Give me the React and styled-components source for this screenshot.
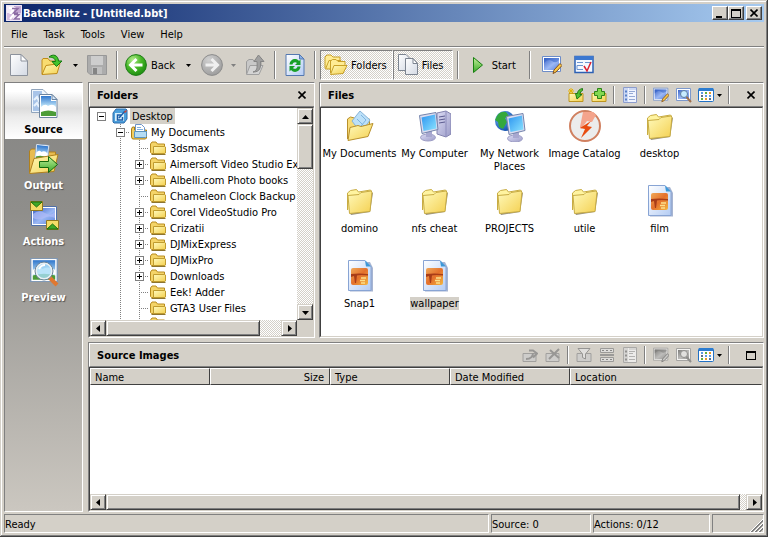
import React, { useState } from 'react';
import styled, { createGlobalStyle, css } from 'styled-components';

const face = '#d4d0c8';
const shade = '#808080';
const dark = '#404040';

const GlobalStyle = createGlobalStyle`
  * {
    box-sizing: border-box;
  }
  body {
    margin: 0;
    background: ${face};
    color: #000;
    font-family: "DejaVu Sans Condensed", "Noto Sans", sans-serif;
    font-size: 11px;
    line-height: 13px;
  }
  button {
    margin: 0;
    padding: 0;
    border: none;
    background: none;
    color: inherit;
    font: inherit;
  }
  ul {
    margin: 0;
    padding: 0;
    list-style: none;
  }
  h2 {
    margin: 0;
    font: inherit;
    font-weight: bold;
  }
  svg {
    display: block;
    flex: none;
  }
`;

const raised = css`
  background: ${face};
  border: 1px solid;
  border-color: ${face} ${dark} ${dark} ${face};
  box-shadow: inset 1px 1px 0 #fff, inset -1px -1px 0 ${shade};
`;

const dither = css`
  background: repeating-conic-gradient(#fff 0 25%, ${face} 0 50%) 0 0 / 2px 2px;
`;

/* ---------- icons ---------- */

const GradientSvg = styled.svg`
  width: 0;
  height: 0;
`;

const Gradients = () => (
  <GradientSvg aria-hidden="true">
    <defs>
      <linearGradient id="yellow" x1="0" y1="0" x2="1" y2="1">
        <stop offset="0" stopColor="#fffabc" />
        <stop offset="1" stopColor="#f4d050" />
      </linearGradient>
      <linearGradient id="paper" x1="0" y1="0" x2="1" y2="1">
        <stop offset="0" stopColor="#fff" />
        <stop offset="1" stopColor="#d4dae4" />
      </linearGradient>
      <linearGradient id="bluePaper" x1="0" y1="0" x2="1" y2="1">
        <stop offset="0" stopColor="#fff" />
        <stop offset="1" stopColor="#b4ccf4" />
      </linearGradient>
      <linearGradient id="screen" x1="0" y1="0" x2="1" y2="1">
        <stop offset="0" stopColor="#2c94f0" />
        <stop offset="1" stopColor="#8ce4ff" />
      </linearGradient>
      <linearGradient id="sky" x1="0" y1="0" x2="0" y2="1">
        <stop offset="0" stopColor="#2f76cc" />
        <stop offset="0.65" stopColor="#b8e0f8" />
        <stop offset="1" stopColor="#e8f6fc" />
      </linearGradient>
      <linearGradient id="picture" x1="0" y1="0" x2="1" y2="1">
        <stop offset="0" stopColor="#3a64c8" />
        <stop offset="0.55" stopColor="#9cb8f4" />
        <stop offset="1" stopColor="#5c84dc" />
      </linearGradient>
      <linearGradient id="sunset" x1="0" y1="0" x2="1" y2="1">
        <stop offset="0" stopColor="#f0a858" />
        <stop offset="0.5" stopColor="#e4702c" />
        <stop offset="1" stopColor="#f4b840" />
      </linearGradient>
      <linearGradient id="case" x1="0" y1="0" x2="1" y2="1">
        <stop offset="0" stopColor="#dcdcf4" />
        <stop offset="1" stopColor="#9c9cc8" />
      </linearGradient>
      <radialGradient id="greenBall" cx="0.35" cy="0.25" r="0.8">
        <stop offset="0" stopColor="#b4ec8c" />
        <stop offset="0.5" stopColor="#48b828" />
        <stop offset="1" stopColor="#1c8c10" />
      </radialGradient>
      <radialGradient id="grayBall" cx="0.35" cy="0.25" r="0.8">
        <stop offset="0" stopColor="#d0d0d0" />
        <stop offset="1" stopColor="#9c9c9c" />
      </radialGradient>
      <radialGradient id="globe" cx="0.3" cy="0.3" r="0.8">
        <stop offset="0" stopColor="#70b8f8" />
        <stop offset="1" stopColor="#0c48a8" />
      </radialGradient>
      <linearGradient id="greenArrow" x1="0" y1="0" x2="0" y2="1">
        <stop offset="0" stopColor="#c4f09c" />
        <stop offset="1" stopColor="#38a828" />
      </linearGradient>
    </defs>
  </GradientSvg>
);

const AppIcon = () => (
  <svg width="16" height="16" viewBox="0 0 16 16">
    <path d="M0 0h16v16H0z" fill="#f4ecf8" />
    <path d="M8 0h8v8H8z" fill="#c4a8d4" />
    <path d="M0 8h7v8H0z" fill="#d4bce0" />
    <path d="M3 3h5L5 8h4l-5 6" stroke="#fff" strokeWidth="2" fill="none" />
    <path d="M6 3.500h6L7.500 8H12M8 9.500h5L8.500 14H14" stroke="#8c6ca4" strokeWidth="1.500" fill="none" />
    <path d="M.5.5h15v15H.5z" fill="none" stroke="#ece4f4" />
  </svg>
);

const NewIcon = () => (
  <svg width="20" height="24" viewBox="0 0 20 24">
    <path d="M1.500 1.500H12L18.500 8V22.500H1.500z" fill="url(#paper)" stroke="#8c929c" />
    <path d="M12 1.500V8H18.500z" fill="#fff" stroke="#8c929c" />
  </svg>
);

const OpenIcon = () => (
  <svg width="24" height="24" viewBox="0 0 24 24">
    <path d="M3 21V7l1-1.500h5L11 8h7v5" fill="#f8dc70" stroke="#c08c18" />
    <path d="M3 21.500L7 12.500l14-2-3 10z" fill="url(#yellow)" stroke="#c08c18" />
    <path d="M10 4C14 .5 19 2 19.500 8H23l-5.500 5.500L13 8.500h3.500C16 5 14 4.500 10 4z" fill="#44c42c" stroke="#147810" />
  </svg>
);

const SaveIcon = () => (
  <svg width="20" height="20" viewBox="0 0 20 20">
    <path d="M.5.5h19v19H3L.5 17z" fill="#acacac" stroke="#989898" />
    <path d="M4 1h12v9H4z" fill="#cdcdcd" />
    <path d="M5 12h10v7H5z" fill="#c0c0c0" />
    <path d="M6 13h4v6H6z" fill="#848484" />
  </svg>
);

const BallIcon = ({ forward }) => (
  <svg width="22" height="22" viewBox="0 0 22 22">
    <circle cx="11" cy="11" r="10.400" fill={forward ? 'url(#grayBall)' : 'url(#greenBall)'} stroke={forward ? '#8c8c8c' : '#1c7c14'} />
    <path
      d={forward ? 'M4.500 11H16M10.500 5l6 6-6 6' : 'M17.500 11H6M11.500 5l-6 6 6 6'}
      fill="none"
      stroke={forward ? '#f0f0f0' : '#fff'}
      strokeWidth="3"
    />
  </svg>
);

const UpIcon = () => (
  <svg width="20" height="22" viewBox="0 0 20 22">
    <path d="M1.500 20V7.500L4 5.500h4l1 2h7V12" fill="#c8c8c8" stroke="#9c9c9c" />
    <path d="M1.500 20.500L5 11.500h13l-4 9z" fill="#d4d4d4" stroke="#a0a0a0" />
    <path d="M8 18c4-1 4.500-4 4-10.500H9L13.500 1 19 7.500h-3.500C16 14 15 18 8 18z" fill="#a0a0a0" stroke="#848484" />
  </svg>
);

const RefreshIcon = () => (
  <svg width="20" height="22" viewBox="0 0 20 22">
    <path d="M1 .5H14.500L19 5V21.500H1z" fill="url(#bluePaper)" stroke="#5478b0" />
    <path d="M14.500.5V5H19z" fill="#88b0e8" stroke="#5478b0" />
    <path d="M4.500 10.500C5 5 11 3.500 14 7l1.500-1.500V11H10l2-2C10.500 7.500 8 8 7.500 10.500z" fill="#18a028" />
    <path d="M15.500 12.500C15 18 9 19.500 6 16l-1.500 1.500V12H10l-2 2c1.500 1.500 4 1 4.500-1.500z" fill="#18a028" />
  </svg>
);

const FoldersIcon = () => (
  <svg width="24" height="22" viewBox="0 0 24 22">
    <path d="M1 14V3l2-2h4l2 2h7v4" fill="#ffec94" stroke="#c8a028" />
    <path d="M1.500 15L5 6.500h12l-4 8.500z" fill="url(#yellow)" stroke="#c8a028" />
    <path d="M6.500 19V7l2-1.500h3.500l2 2h7V11" fill="#ffec94" stroke="#c8a028" />
    <path d="M6.500 20.500L10 11.500h13l-4 8z" fill="url(#yellow)" stroke="#c8a028" />
  </svg>
);

const FilesIcon = () => (
  <svg width="22" height="22" viewBox="0 0 22 22">
    <path d="M1.500.5H9l4 4V16.500H1.500z" fill="url(#paper)" stroke="#7c8490" />
    <path d="M8.500 4.500H16L20.500 9.500V20.500H8.500z" fill="url(#paper)" stroke="#7c8490" />
    <path d="M16 4.500V9.500h4.500z" fill="#fff" stroke="#7c8490" />
  </svg>
);

const StartIcon = () => (
  <svg width="12" height="18" viewBox="0 0 12 18">
    <path d="M1.500 1.500L10.500 9l-9 7.500z" fill="url(#greenArrow)" stroke="#188010" />
  </svg>
);

const EditImageIcon = ({ size = 16 }) => (
  <svg width={size} height={size} viewBox="0 0 20 20">
    <path d="M.5 1.500h18v15H.5z" fill="#fff" stroke="#6c8cc8" />
    <path d="M2 3h15v12H2z" fill="url(#picture)" />
    <path d="M2 8q4-5 8-2t7-1V3H2z" fill="#2c5cc4" opacity="0.500" />
    <path d="M11 18.500l1-3.500 6-6.500 2 2-6 6.500z" fill="#f8c848" stroke="#84501c" />
  </svg>
);

const OptionsIcon = () => (
  <svg width="20" height="20" viewBox="0 0 20 20">
    <path d="M1 1.500h18v16H1z" fill="#f4f8ff" stroke="#2c60b4" strokeWidth="1.500" />
    <path d="M1 1h18v4H1z" fill="#3c78d0" />
    <path d="M3 7.500h6M11 7.500h6M3 10.500h6M3 10.500v4h6" stroke="#6c94d0" fill="none" />
    <path d="M10 11l3 5 4-9" stroke="#dc2030" strokeWidth="1.500" fill="none" />
  </svg>
);

const AddFolderIcon = ({ star }) => (
  <svg width="16" height="16" viewBox="0 0 16 16">
    <path d="M1 6.500h14v8H1z" fill="url(#yellow)" stroke="#bc9420" />
    {star ? (
      <>
        <path d="M3 1v6M0 4h6M1 2l4 4M5 2L1 6" stroke="#e8b400" />
        <path d="M14.500 1.500c-3 .5-5 2.500-5 5H7.500L9 12l5-4.500h-2c0-2 1-3.500 2.500-4z" fill="#50c030" stroke="#207814" />
      </>
    ) : (
      <path d="M6.500 1.500h4v3h3v4h-3v3h-4v-3h-3v-4h3z" fill="#84d850" stroke="#2c8418" />
    )}
  </svg>
);

const RemoveIcon = ({ cross }) => (
  <svg width="16" height="16" viewBox="0 0 16 16">
    <path d="M1 6.500h13v8H1z" fill="#ccc" stroke="#909090" />
    <path d={cross ? 'M5 3l9 8M14 2L4 12' : 'M4 12c5 0 7-3 7-6M7 3.500h4l4 3-4 4'} stroke="#848484" strokeWidth="2" fill="none" />
  </svg>
);

const FilterIcon = () => (
  <svg width="16" height="16" viewBox="0 0 16 16">
    <path d="M1 6.500h14v8H1z" fill="#ccc" stroke="#909090" />
    <path d="M2 1.500h12L9.500 7v5l-3-1.500V7z" fill="#e4e4e4" stroke="#808080" />
  </svg>
);

const SplitIcon = () => (
  <svg width="16" height="16" viewBox="0 0 16 16">
    <path d="M1.500 1.500h13v4h-13zM1.500 10.500h13v4h-13z" fill="#e0e0e0" stroke="#888" />
    <path d="M1 8h14" stroke="#888" strokeWidth="2" />
    <path d="M3 3.500h10M3 12.500h10" stroke="#707070" strokeDasharray="2 2" />
  </svg>
);

const ListIcon = () => (
  <svg width="16" height="16" viewBox="0 0 16 16">
    <path d="M1.500.5h13v15h-13z" fill="#f0f4ff" stroke="#8c9ccc" />
    <path d="M2 1h4v14H2zM7 1h7v2H7z" fill="#ccd8f4" />
    <path d="M3 4.500h2M3 8.500h2M3 12.500h2" stroke="#5880c8" strokeWidth="2" />
    <path d="M7 4.500h6M7 6.500h4M7 9.500h6M7 12.500h6" stroke="#94a8d4" />
  </svg>
);

const FindImageIcon = () => (
  <svg width="16" height="16" viewBox="0 0 16 16">
    <path d="M.5 1.500h14v12H.5z" fill="#fff" stroke="#7c98cc" />
    <path d="M2 3h11v9H2z" fill="url(#picture)" />
    <circle cx="8" cy="7" r="3.500" fill="#c8ecff" stroke="#5c7ca0" />
    <path d="M10.500 10l4.500 5" stroke="#a0704c" strokeWidth="2" />
  </svg>
);

const GridIcon = () => (
  <svg width="16" height="16" viewBox="0 0 16 16">
    <rect x="0.5" y="1.500" width="15" height="13" rx="1" fill="#fff" stroke="#2070c4" />
    <path d="M1 1h14v3H1z" fill="#2c7cd0" />
    <path d="M3 5h2v2H3zM11 8h2v2h-2zM7 8h2v2H7z" fill="#5c9ce4" />
    <path d="M7 5h2v2H7zM3 11h2v2H3z" fill="#60b040" />
    <path d="M11 5h2v2h-2zM7 11h2v2H7z" fill="#e89828" />
    <path d="M3 8h2v2H3zM11 11h2v2h-2z" fill="#587088" />
  </svg>
);

const Caret = ({ muted }) => (
  <svg width="5" height="3" viewBox="0 0 5 3">
    <path d="M0 0h5L2.500 3z" fill={muted ? '#808080' : '#000'} />
  </svg>
);

const CloseGlyph = () => (
  <svg width="8" height="8" viewBox="0 0 8 8">
    <path d="M.5.5l7 7M7.500.5l-7 7" stroke="#000" strokeWidth="1.600" />
  </svg>
);

const MaximizeGlyph = () => (
  <svg width="10" height="9" viewBox="0 0 10 9">
    <path d="M0 0h10v9H0zM1 2v6h8V2z" fill="#000" fillRule="evenodd" />
  </svg>
);

const MinimizeGlyph = () => (
  <svg width="10" height="9" viewBox="0 0 10 9">
    <path d="M1 7h6v2H1z" fill="#000" />
  </svg>
);

const TriangleGlyph = ({ dir }) => {
  const paths = {
    up: 'M0 6h7L3.500 2z',
    down: 'M0 2h7L3.500 6z',
    left: 'M5 0v7L1 3.500z',
    right: 'M2 0v7l4-3.500z',
  };
  return (
    <svg width="7" height="7" viewBox="0 0 7 7">
      <path d={paths[dir]} fill="#000" />
    </svg>
  );
};

const Photo = ({ x, y, w, h }) => (
  <svg x={x} y={y} width={w} height={h} viewBox="0 0 20 22" preserveAspectRatio="none">
    <path d="M.5.5h19v21H.5z" fill="#fff" stroke="#8098b4" />
    <path d="M2 2h16v18H2z" fill="url(#sky)" />
    <path d="M2 11q4-4 7-1 5-3 9 1v4H2z" fill="#fff" />
    <path d="M2 16q8-3 16 0v4H2z" fill="#4c9c38" />
  </svg>
);

const SourceIcon = () => (
  <svg width="32" height="32" viewBox="0 0 32 32">
    <path d="M3.500 1.500H15l4 4V24.500H3.500z" fill="#f0f6fc" stroke="#90a4bc" />
    <path d="M5 3h9v4h4v16H5z" fill="#a8c4e8" />
    <path d="M6 12l3-3 2 4 3-3M6 18l3-3 2 4" stroke="#e8f2fc" strokeWidth="2" fill="none" />
    <path d="M11.500 6.500H24l5 5V29.500H11.500z" fill="#fff" stroke="#6c84a0" />
    <path d="M13 8h10v5h5v10H13z" fill="url(#sky)" />
    <path d="M13 19q4-4 7-1 5-3 8 1v5H13z" fill="#fff" />
    <path d="M13 24q7-3 15 0v4H13z" fill="#4c9c38" />
    <path d="M24 6.500v5h5z" fill="#d8e8f8" stroke="#6c84a0" />
  </svg>
);

const OutputIcon = () => (
  <svg width="32" height="32" viewBox="0 0 32 32">
    <path d="M1.500 29V7l2-2h7l2 3h15v7" fill="#e8bc50" stroke="#b0801c" />
    <g transform="rotate(6 14 8)">
      <Photo x={7} y={0} w={14} h={18} />
    </g>
    <path d="M1.500 29.500L6 14.500l24-4-4 17z" fill="url(#yellow)" stroke="#b0801c" />
    <path d="M11.500 17.500h9v-5l9 8-9 8v-5h-9z" fill="url(#greenArrow)" stroke="#14680c" />
  </svg>
);

const ActionsIcon = () => (
  <svg width="32" height="32" viewBox="0 0 32 32">
    <path d="M3.500 6.500h25v19h-25z" fill="#fff" stroke="#5070a8" />
    <path d="M5 8h22v16H5z" fill="url(#picture)" />
    <path d="M5 14q6-5 12-1t10-1v6q-6-3-11 0t-11 0z" fill="#b0bcf8" opacity="0.700" />
    <path d="M2.500 1.500h12v9h-12z" fill="#f4dc68" stroke="#907820" />
    <path d="M3 2h11l-5.500 5z" fill="#40a828" stroke="#1c7010" />
    <path d="M18.500 20.500h12v9h-12z" fill="#f4dc68" stroke="#907820" />
    <path d="M19 29h11l-5.500-5z" fill="#40a828" stroke="#1c7010" />
  </svg>
);

const PreviewIcon = () => (
  <svg width="32" height="32" viewBox="0 0 32 32">
    <Photo x={2} y={2} w={28} h={24} />
    <path d="M21 21l8 8" stroke="#e07830" strokeWidth="4" />
    <circle cx="16" cy="15" r="8" fill="#a8dcf8" fillOpacity="0.800" stroke="#e8f0f4" strokeWidth="2" />
    <circle cx="16" cy="15" r="9" fill="none" stroke="#6c8498" />
    <path d="M11 13q2-4 6-4" stroke="#fff" strokeWidth="2" fill="none" />
  </svg>
);

const SmallFolder = () => (
  <svg width="16" height="16" viewBox="0 0 16 16">
    <path d="M.5 12.500V4l1.500-2h4l1.500 2h7V13.500H1.500z" fill="#f4d468" stroke="#b88c20" />
    <path d="M3.500 13V6.500h11l1 .5V13l-1 .5h-11z" fill="url(#yellow)" stroke="#c09c30" />
    <path d="M1.500 14.500h14" stroke="#8c7430" />
  </svg>
);

const SmallDesktop = () => (
  <svg width="16" height="16" viewBox="0 0 16 16">
    <path d="M1 5l3-4h10l1 1v9l-3 4H2l-1-1z" fill="#4ca0dc" stroke="#2c6cac" />
    <path d="M3 5h9v8H3z" fill="#d8f0fc" />
    <path d="M9.500 7h-4v5h5V9M7 10l6-7" stroke="#1c5ca8" strokeWidth="1.500" fill="none" />
    <path d="M12 4l2-2 1 1-2 2z" fill="#d04030" />
  </svg>
);

const SmallDocuments = () => (
  <svg width="16" height="16" viewBox="0 0 16 16">
    <path d="M.5 13V5l1-2h2v3h12v8l-1 1h-13z" fill="#f0cc60" stroke="#a87c14" />
    <path d="M4.500.5h6l3 3V9h-9z" fill="#fff" stroke="#6c94c8" />
    <path d="M6 3.500h4M6 5.500h6" stroke="#80b0e0" />
    <path d="M3.500 7.500h12v5l-1 1h-11z" fill="#b4dcf4" stroke="#5c94c0" />
  </svg>
);

const BigFolder = () => (
  <svg width="32" height="32" viewBox="0 0 32 32">
    <path d="M6 28l1 2 19-3 3-19-2-1z" fill="#6c6448" opacity="0.700" />
    <path d="M3.500 25V8l3-2.500 6-1 2 2.500 12-2 1 1V12" fill="#fff4a0" stroke="#c8ac44" />
    <path d="M5.500 28.500L4 10.500l11-1 2-2 10-1.500 1 1-2 19.500z" fill="url(#yellow)" stroke="#c8ac44" />
  </svg>
);

const BigDocuments = () => (
  <svg width="32" height="32" viewBox="0 0 32 32">
    <path d="M3.500 29V9l3-2 4 1 2 3 13-2v8" fill="#f8dc78" stroke="#b8902c" />
    <path d="M16 1l10 9-9 13L8 11z" fill="#bce0f8" stroke="#88b4d8" />
    <path d="M17 5l5 5-5 6M13 9l7 7" stroke="#7cb4e0" fill="none" />
    <path d="M4 30.500l2-13 8-2 3 1 12-3-5 13z" fill="url(#yellow)" stroke="#b8902c" />
  </svg>
);

const Monitor = () => (
  <>
    <ellipse cx="9" cy="27.500" rx="7.500" ry="3.500" fill="url(#case)" stroke="#9c9cc4" />
    <path d="M7 21h6v6H7z" fill="#a8a8d0" />
    <path d="M.5 5.500L17 2.500l2 17-16 4z" fill="#dcdcf0" stroke="#7484ac" />
    <path d="M2.500 7.500L16 4.500l1.500 14L4.500 21z" fill="url(#screen)" />
  </>
);

const ComputerIcon = () => (
  <svg width="32" height="32" viewBox="0 0 32 32">
    <path d="M18 3l9-2 5 3v20l-5 3-9-3z" fill="url(#case)" stroke="#8484b0" />
    <path d="M27 1v26" stroke="#8c8cbc" />
    <path d="M20 7l6-1M20 10l6-1M20 13l6-1" stroke="#5c5c90" />
    <Monitor />
  </svg>
);

const NetworkIcon = () => (
  <svg width="32" height="32" viewBox="0 0 32 32">
    <circle cx="11" cy="11" r="10" fill="url(#globe)" />
    <path d="M3 6q3-5 9-4l3 4-4 2 2 4-4 7-4-2-1-5-3-2z" fill="#34a83c" />
    <g transform="translate(12 1)">
      <Monitor />
    </g>
  </svg>
);

const CatalogIcon = () => (
  <svg width="32" height="32" viewBox="0 0 32 32">
    <circle cx="16" cy="16" r="15" fill="#ececec" stroke="#d08060" strokeWidth="2" />
    <path d="M15 2h9q2 1 3 3l-4 7-5-1-6 8-1-2 3-15z" fill="#f4a48c" />
    <path d="M22 11L11 18l5 1-4 9 11-11-5-1z" fill="#e84c10" />
  </svg>
);

const ImageFileIcon = () => (
  <svg width="32" height="32" viewBox="0 0 32 32">
    <path d="M6 2h20l3 6v23.500H6z" fill="#6c84b4" opacity="0.600" />
    <path d="M4.500.5H21l6 6V30.500H4.500z" fill="url(#bluePaper)" stroke="#88a4d4" />
    <path d="M21 .5l1 6h5z" fill="#3c98d8" />
    <rect x="7" y="8" width="17" height="17" rx="2" fill="url(#sunset)" />
    <path d="M7 14q8-1 17 0v1.500q-8-1-11 0L12 23h-1l-1-7-3 1z" fill="#a83c18" />
    <path d="M17 18h5M16 20.500h5M17 23h4" stroke="#fce08c" strokeWidth="1.500" />
  </svg>
);

const Grip = () => (
  <svg width="14" height="14" viewBox="0 0 14 14">
    <path d="M1 14L14 1M5 14l9-9M9 14l5-5" stroke="#fff" />
    <path d="M2 14L14 2M3 14L14 3M6 14l8-8M7 14l7-7M10 14l4-4M11 14l3-3" stroke="#808080" />
  </svg>
);

/* ---------- window ---------- */

const Window = styled.div`
  display: flex;
  flex-direction: column;
  min-height: 100vh;
  padding: 4px;
  background: ${face};
  box-shadow: inset -1px -1px 0 ${dark}, inset 1px 1px 0 ${face}, inset -2px -2px 0 ${shade}, inset 2px 2px 0 #fff;
`;

const TitleBar = styled.header`
  display: flex;
  align-items: center;
  gap: 1px;
  height: 18px;
  padding: 0 2px;
  background: linear-gradient(to right, #0a246a, #a6caf0);
  color: #fff;
`;

const Title = styled.h1`
  flex: 1;
  margin: 0;
  font-size: 11px;
  line-height: 13px;
`;

const WindowButtons = styled.div`
  display: flex;
`;

const WindowButton = styled.button`
  ${raised}
  display: flex;
  align-items: center;
  justify-content: center;
  width: 16px;
  height: 14px;
  border-color: #fff ${dark} ${dark} #fff;
  box-shadow: inset -1px -1px 0 ${shade};
  &:last-child {
    margin-left: 2px;
  }
`;

const MenuBar = styled.nav`
  display: flex;
  align-items: center;
  gap: 16px;
  height: 25px;
  padding: 1px 7px 0;
  border-bottom: 1px solid ${shade};
`;

const MenuItem = styled.button`
  height: 20px;
`;

const Toolbar = styled.div`
  display: flex;
  align-items: center;
  height: 35px;
  border-top: 1px solid #fff;
`;

const ToolButton = styled.button`
  display: flex;
  align-items: center;
  justify-content: center;
  gap: ${({ $gap = 4 }) => $gap}px;
  width: ${({ $width }) => ($width ? `${$width}px` : 'auto')};
  height: 30px;
  padding: 0 ${({ $width }) => ($width ? 0 : 3)}px;
`;

const ToggleButton = styled(ToolButton)`
  justify-content: flex-start;
  min-width: 60px;
  padding: 0 5px 0 3px;
  border: 1px solid transparent;
  &[aria-pressed='true'] {
    ${dither}
    border-color: ${shade} #fff #fff ${shade};
  }
`;

const Divider = styled.span`
  flex: none;
  width: 2px;
  height: ${({ $tall }) => ($tall ? 28 : 18)}px;
  margin: 0 ${({ $tall }) => ($tall ? 4 : 3)}px;
  border-left: 1px solid ${shade};
  border-right: 1px solid #fff;
`;

const Main = styled.main`
  display: flex;
  flex: 1;
  gap: 5px;
`;

const Sidebar = styled.nav`
  display: flex;
  flex-direction: column;
  width: 79px;
  border: 1px solid;
  border-color: ${shade} #fff #fff ${shade};
  background: linear-gradient(#858583, #8f8e8b 30%, #cbc7c0);
`;

const SideTab = styled.button`
  display: flex;
  flex-direction: column;
  align-items: center;
  gap: 3px;
  height: 56px;
  padding-top: 5px;
  color: ${({ $active }) => ($active ? '#000' : '#fff')};
  font-weight: bold;
  text-shadow: ${({ $active }) => ($active ? 'none' : '1px 1px 1px #555')};
  background: ${({ $active }) => ($active ? 'linear-gradient(#fff 15%, #dcdcdc 45%, #ebebeb 60%, #fff)' : 'none')};
`;

const Workspace = styled.div`
  display: flex;
  flex: 1;
  flex-direction: column;
  gap: 4px;
  min-width: 0;
`;

const Upper = styled.div`
  display: flex;
  gap: 4px;
  height: 256px;
`;

const PanelBox = styled.section`
  display: flex;
  flex-direction: column;
  flex: ${({ $width }) => ($width ? `none` : 1)};
  width: ${({ $width }) => ($width ? `${$width}px` : 'auto')};
  min-width: 0;
  border: 1px solid;
  border-color: ${shade} #fff #fff ${shade};
`;

const PanelHeader = styled.div`
  display: flex;
  align-items: center;
  height: 24px;
  padding: 0 1px 0 7px;
  border-top: 1px solid #fff;
  border-left: 1px solid #fff;
  border-bottom: 1px solid ${shade};
  h2 {
    flex: 1;
  }
`;

const PanelBody = styled.div`
  display: flex;
  flex: 1;
  flex-direction: column;
  min-height: 0;
  border: 1px solid;
  border-color: ${dark} ${face} ${face} ${dark};
  background: #fff;
`;

const PanelButton = styled.button`
  display: flex;
  align-items: center;
  justify-content: center;
  gap: 3px;
  width: ${({ $wide }) => ($wide ? 30 : 23)}px;
  height: 20px;
  &:disabled svg {
    filter: grayscale(1);
    opacity: 0.75;
  }
`;

const PanelClose = styled(PanelButton)`
  margin-left: 6px;
`;

const ScrollButton = styled.button`
  ${raised}
  display: flex;
  flex: none;
  align-items: center;
  justify-content: center;
  width: 16px;
  height: 16px;
`;

const ScrollBox = styled.div`
  ${dither}
  display: flex;
  flex: ${({ $vertical }) => ($vertical ? 'none' : 1)};
  flex-direction: ${({ $vertical }) => ($vertical ? 'column' : 'row')};
  width: ${({ $vertical }) => ($vertical ? '16px' : 'auto')};
  height: ${({ $vertical }) => ($vertical ? 'auto' : '16px')};
`;

const ScrollTrack = styled.div`
  display: flex;
  flex: 1;
  flex-direction: inherit;
`;

const ScrollThumb = styled.div`
  ${raised}
`;

const ScrollRow = styled.div`
  display: flex;
  flex: none;
  background: ${face};
`;

const ScrollCorner = styled.div`
  width: 16px;
`;

const ScrollBar = ({ vertical, part }) => (
  <ScrollBox $vertical={vertical}>
    <ScrollButton aria-label={vertical ? 'Scroll up' : 'Scroll left'}>
      <TriangleGlyph dir={vertical ? 'up' : 'left'} />
    </ScrollButton>
    <ScrollTrack>
      <ScrollThumb style={{ flexBasis: `${part}%` }} />
    </ScrollTrack>
    <ScrollButton aria-label={vertical ? 'Scroll down' : 'Scroll right'}>
      <TriangleGlyph dir={vertical ? 'down' : 'right'} />
    </ScrollButton>
  </ScrollBox>
);

/* ---------- folders tree ---------- */

const TreeArea = styled.div`
  display: flex;
  flex: 1;
  min-height: 0;
`;

const Tree = styled.ul`
  flex: 1;
  min-width: 0;
  padding-left: 2px;
  overflow: hidden;
`;

const TreeRow = styled.li`
  display: flex;
  align-items: center;
  height: 16px;
  white-space: nowrap;
`;

const dotsDown = 'repeating-linear-gradient(#808080 0 1px, transparent 1px 2px) 9px 0 / 1px 100% no-repeat';
const dotsAcross = 'repeating-linear-gradient(to right, #808080 0 1px, transparent 1px 2px) 9px 8px / 10px 1px no-repeat';

const Branch = styled.span`
  display: flex;
  flex: none;
  align-items: center;
  justify-content: center;
  width: 19px;
  height: 16px;
  background: ${({ $line, $stub }) => [$line && dotsDown, $stub && dotsAcross].filter(Boolean).join(', ') || 'none'};
`;

const Expander = styled.button`
  display: flex;
  align-items: center;
  justify-content: center;
  width: 9px;
  height: 9px;
  border: 1px solid ${shade};
  background: #fff;
`;

const TreeIcon = styled.span`
  margin: 0 2px 0 1px;
`;

const TreeLabel = styled.span`
  height: 16px;
  padding: 2px 2px 1px;
  background: ${({ $selected }) => ($selected ? face : 'none')};
`;

const tree = [
  { name: 'Desktop', level: 0, sign: '-', icon: <SmallDesktop />, selected: true },
  { name: 'My Documents', level: 1, sign: '-', icon: <SmallDocuments /> },
  { name: '3dsmax', level: 2 },
  { name: 'Aimersoft Video Studio Exp', level: 2, sign: '+' },
  { name: 'Albelli.com Photo books', level: 2, sign: '+' },
  { name: 'Chameleon Clock Backup', level: 2 },
  { name: 'Corel VideoStudio Pro', level: 2, sign: '+' },
  { name: 'Crizatii', level: 2, sign: '+' },
  { name: 'DJMixExpress', level: 2, sign: '+' },
  { name: 'DJMixPro', level: 2, sign: '+' },
  { name: 'Downloads', level: 2, sign: '+' },
  { name: 'Eek! Adder', level: 2 },
  { name: 'GTA3 User Files', level: 2 },
  { name: '', level: 2 },
];

const TreeItem = ({ name, level, sign, icon, selected }) => (
  <TreeRow>
    {level > 0 && <Branch />}
    {level > 1 && <Branch $line />}
    <Branch $line={level > 0} $stub={level > 0}>
      {sign && (
        <Expander aria-label={`Toggle ${name}`}>
          <svg width="5" height="5" viewBox="0 0 5 5">
            <path d={sign === '+' ? 'M0 2h5v1H0zM2 0h1v5H2z' : 'M0 2h5v1H0z'} />
          </svg>
        </Expander>
      )}
    </Branch>
    <TreeIcon>{icon || <SmallFolder />}</TreeIcon>
    <TreeLabel $selected={selected}>{name}</TreeLabel>
  </TreeRow>
);

/* ---------- files ---------- */

const FileGrid = styled.div`
  display: grid;
  grid-template-columns: repeat(auto-fill, 75px);
  grid-auto-rows: 75px;
  padding: 2px 1px;
`;

const FileItem = styled.button`
  display: flex;
  flex-direction: column;
  align-items: center;
  gap: 5px;
`;

const FileLabel = styled.span`
  background: ${({ $selected }) => ($selected ? face : 'none')};
`;

const files = [
  { name: 'My Documents', Icon: BigDocuments },
  { name: 'My Computer', Icon: ComputerIcon },
  { name: 'My Network Places', Icon: NetworkIcon },
  { name: 'Image Catalog', Icon: CatalogIcon },
  { name: 'desktop', Icon: BigFolder },
  { name: 'domino', Icon: BigFolder },
  { name: 'nfs cheat', Icon: BigFolder },
  { name: 'PROJECTS', Icon: BigFolder },
  { name: 'utile', Icon: BigFolder },
  { name: 'film', Icon: ImageFileIcon },
  { name: 'Snap1', Icon: ImageFileIcon },
  { name: 'wallpaper', Icon: ImageFileIcon },
];

/* ---------- source images ---------- */

const ImageTable = styled.table`
  width: 100%;
  border-collapse: separate;
  border-spacing: 0;
  table-layout: fixed;
`;

const HeadCell = styled.th`
  width: ${({ $last }) => ($last ? 'auto' : '120px')};
  height: 17px;
  padding: 1px 5px 0 4px;
  background: ${face};
  border: 1px solid;
  border-color: #fff ${({ $last }) => ($last ? face : dark)} ${dark} #fff;
  font-weight: normal;
  text-align: ${({ $right }) => ($right ? 'right' : 'left')};
`;

const TableArea = styled.div`
  flex: 1;
`;

/* ---------- status ---------- */

const StatusBar = styled.footer`
  display: flex;
  gap: 2px;
  height: 19px;
  margin-top: 2px;
`;

const StatusCell = styled.div`
  display: flex;
  align-items: center;
  flex: ${({ $width }) => ($width ? 'none' : 1)};
  width: ${({ $width }) => ($width ? `${$width}px` : 'auto')};
  padding-top: 1px;
  border: 1px solid;
  border-color: ${shade} #fff #fff ${shade};
  svg {
    align-self: flex-end;
    margin-left: auto;
  }
`;

const sideTabs = [
  { name: 'Source', Icon: SourceIcon },
  { name: 'Output', Icon: OutputIcon },
  { name: 'Actions', Icon: ActionsIcon },
  { name: 'Preview', Icon: PreviewIcon },
];

const App = () => {
  const [tab, setTab] = useState('Source');
  const [selected, setSelected] = useState('wallpaper');
  const [showFolders, setShowFolders] = useState(true);
  const [showFiles, setShowFiles] = useState(true);

  return (
    <>
      <GlobalStyle />
      <Gradients />
      <Window>
        <TitleBar>
          <AppIcon />
          <Title>BatchBlitz - [Untitled.bbt]</Title>
          <WindowButtons>
            <WindowButton aria-label="Minimize"><MinimizeGlyph /></WindowButton>
            <WindowButton aria-label="Maximize"><MaximizeGlyph /></WindowButton>
            <WindowButton aria-label="Close"><CloseGlyph /></WindowButton>
          </WindowButtons>
        </TitleBar>

        <MenuBar>
          {['File', 'Task', 'Tools', 'View', 'Help'].map((name) => (
            <MenuItem key={name}>{name}</MenuItem>
          ))}
        </MenuBar>

        <Toolbar>
          <ToolButton $width={30} aria-label="New"><NewIcon /></ToolButton>
          <ToolButton $width={34} aria-label="Open"><OpenIcon /></ToolButton>
          <ToolButton $width={14} aria-label="Open recent"><Caret /></ToolButton>
          <ToolButton $width={30} aria-label="Save"><SaveIcon /></ToolButton>
          <Divider $tall />
          <ToolButton><BallIcon />Back</ToolButton>
          <ToolButton $width={20} aria-label="Back history"><Caret /></ToolButton>
          <ToolButton $width={28} aria-label="Forward"><BallIcon forward /></ToolButton>
          <ToolButton $width={14} aria-label="Forward history"><Caret muted /></ToolButton>
          <ToolButton $width={30} aria-label="Up"><UpIcon /></ToolButton>
          <Divider $tall />
          <ToolButton $width={30} aria-label="Refresh"><RefreshIcon /></ToolButton>
          <Divider $tall />
          <ToggleButton $gap={3} aria-pressed={showFolders} onClick={() => setShowFolders(!showFolders)}>
            <FoldersIcon />Folders
          </ToggleButton>
          <ToggleButton $gap={3} aria-pressed={showFiles} onClick={() => setShowFiles(!showFiles)}>
            <FilesIcon />Files
          </ToggleButton>
          <Divider $tall />
          <ToolButton $width={62} $gap={8}><StartIcon />Start</ToolButton>
          <Divider $tall />
          <ToolButton $width={34} aria-label="Edit image"><EditImageIcon size={20} /></ToolButton>
          <ToolButton $width={30} aria-label="Options"><OptionsIcon /></ToolButton>
        </Toolbar>

        <Main>
          <Sidebar>
            {sideTabs.map(({ name, Icon }) => (
              <SideTab key={name} $active={tab === name} onClick={() => setTab(name)}>
                <Icon />
                {name}
              </SideTab>
            ))}
          </Sidebar>

          <Workspace>
            <Upper>
              {showFolders && (
                <PanelBox $width={227}>
                  <PanelHeader>
                    <h2>Folders</h2>
                    <PanelButton aria-label="Close folders"><CloseGlyph /></PanelButton>
                  </PanelHeader>
                  <PanelBody>
                    <TreeArea>
                      <Tree>
                        {tree.map((item) => (
                          <TreeItem key={item.name} {...item} />
                        ))}
                      </Tree>
                      <ScrollBar vertical part={25} />
                    </TreeArea>
                    <ScrollRow>
                      <ScrollBar part={88} />
                      <ScrollCorner />
                    </ScrollRow>
                  </PanelBody>
                </PanelBox>
              )}
              {showFiles && (
                <PanelBox>
                  <PanelHeader>
                    <h2>Files</h2>
                    <PanelButton aria-label="Add to new"><AddFolderIcon star /></PanelButton>
                    <PanelButton aria-label="Add"><AddFolderIcon /></PanelButton>
                    <Divider />
                    <PanelButton aria-label="Details"><ListIcon /></PanelButton>
                    <Divider />
                    <PanelButton aria-label="Edit"><EditImageIcon /></PanelButton>
                    <PanelButton aria-label="View image"><FindImageIcon /></PanelButton>
                    <PanelButton $wide aria-label="View mode"><GridIcon /><Caret /></PanelButton>
                    <Divider />
                    <PanelClose aria-label="Close files"><CloseGlyph /></PanelClose>
                  </PanelHeader>
                  <PanelBody>
                    <FileGrid>
                      {files.map(({ name, Icon }) => (
                        <FileItem key={name} onClick={() => setSelected(name)}>
                          <Icon />
                          <FileLabel $selected={selected === name}>{name}</FileLabel>
                        </FileItem>
                      ))}
                    </FileGrid>
                  </PanelBody>
                </PanelBox>
              )}
            </Upper>

            <PanelBox>
              <PanelHeader>
                <h2>Source Images</h2>
                <PanelButton disabled aria-label="Move"><RemoveIcon /></PanelButton>
                <PanelButton disabled aria-label="Remove"><RemoveIcon cross /></PanelButton>
                <Divider />
                <PanelButton disabled aria-label="Filter"><FilterIcon /></PanelButton>
                <PanelButton disabled aria-label="Split"><SplitIcon /></PanelButton>
                <PanelButton disabled aria-label="Details"><ListIcon /></PanelButton>
                <Divider />
                <PanelButton disabled aria-label="Edit"><EditImageIcon /></PanelButton>
                <PanelButton disabled aria-label="View image"><FindImageIcon /></PanelButton>
                <PanelButton $wide aria-label="View mode"><GridIcon /><Caret /></PanelButton>
                <Divider />
                <PanelClose aria-label="Maximize panel"><MaximizeGlyph /></PanelClose>
              </PanelHeader>
              <PanelBody>
                <TableArea>
                  <ImageTable>
                    <thead>
                      <tr>
                        <HeadCell>Name</HeadCell>
                        <HeadCell $right>Size</HeadCell>
                        <HeadCell>Type</HeadCell>
                        <HeadCell>Date Modified</HeadCell>
                        <HeadCell $last>Location</HeadCell>
                      </tr>
                    </thead>
                  </ImageTable>
                </TableArea>
                <ScrollRow>
                  <ScrollBar part={99} />
                </ScrollRow>
              </PanelBody>
            </PanelBox>
          </Workspace>
        </Main>

        <StatusBar>
          <StatusCell>Ready</StatusCell>
          <StatusCell $width={100}>Source: 0</StatusCell>
          <StatusCell $width={117}>Actions: 0/12</StatusCell>
          <StatusCell $width={52}><Grip /></StatusCell>
        </StatusBar>
      </Window>
    </>
  );
};

export default App;
